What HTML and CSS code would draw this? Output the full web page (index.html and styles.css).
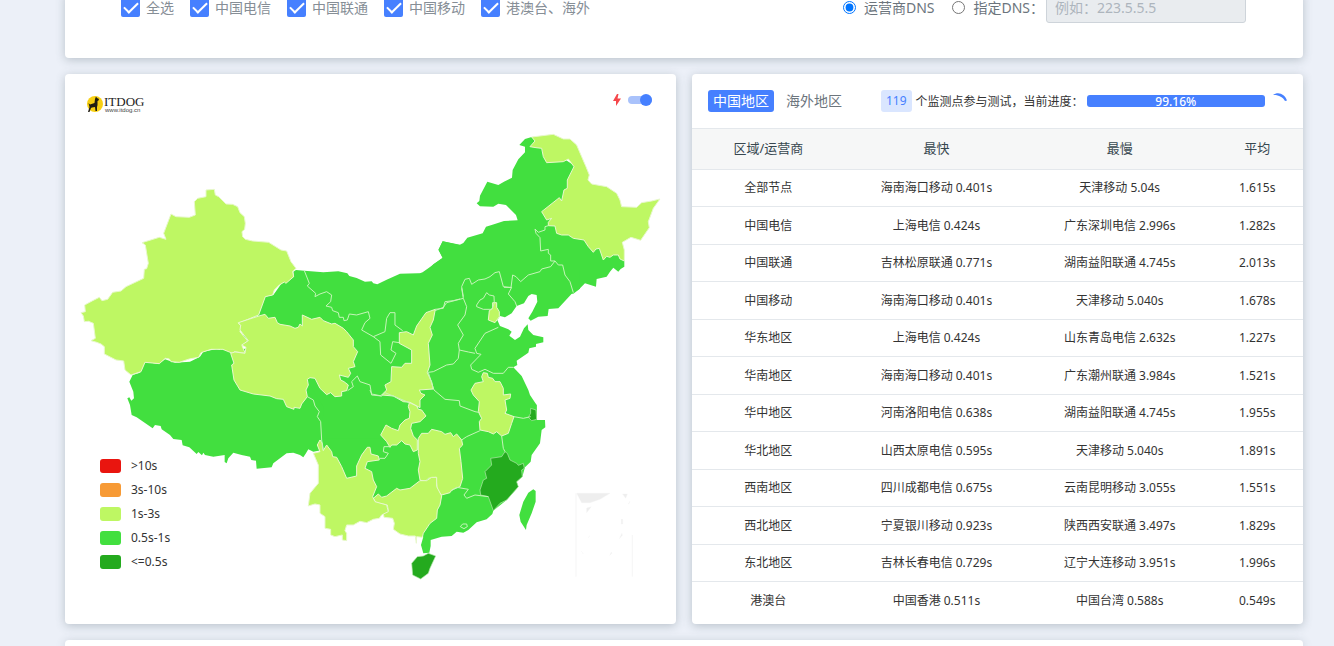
FILE: index.html
```html
<!DOCTYPE html>
<html lang="zh-CN">
<head>
<meta charset="utf-8">
<title>ITDOG</title>
<link rel="stylesheet" href="styles.css">
</head>
<body>
<main class="page">
  <form class="card options">
    <div class="checks">
      <label class="check"><input type="checkbox" checked>全选</label>
      <label class="check"><input type="checkbox" checked>中国电信</label>
      <label class="check"><input type="checkbox" checked>中国联通</label>
      <label class="check"><input type="checkbox" checked>中国移动</label>
      <label class="check"><input type="checkbox" checked>港澳台、海外</label>
    </div>
    <div class="dns">
      <label class="radio"><input type="radio" name="dns" checked>运营商DNS</label>
      <label class="radio"><input type="radio" name="dns" id="custom">指定DNS：</label>
      <input class="dns-input" type="text" aria-label="指定DNS" placeholder="例如：223.5.5.5" disabled>
    </div>
  </form>

  <div class="columns">
    <section class="card map-card">
      <svg class="map" viewBox="65 74 611 550" role="img" aria-label="中国地图">
        <!-- mainland -->
        <g class="mid">
          <path transform="translate(220 240) scale(.3333)" d="M228 90L253 92 310 97 355 94 382 100 388 108 410 114 435 125 455 124 460 130 472 133 500 119 540 101 600 101 622 94 640 73 668 54 656 30 668 4 720 14V602H0V327L40 335 80 325 60 250 117 222 133 170 160 165 185 130 222 110 220 95Z"/>
          <path transform="translate(430 125) scale(.3333)" d="M-20 440L0 426 38 398 25 374 38 349 88 360 100 354 112 338 158 325 168 305 192 298 222 288 263 286 258 270 228 240 205 236 190 245 150 244 140 235 148 228 150 212 172 170 205 180 222 170 246 158 248 135 265 103 285 82 285 65 268 60 285 42 305 36 430 120 480 250 583 405 583 425 572 432 565 440 550 428 540 440 530 455 500 462 498 485 465 475 445 495 430 506H-20Z"/>
          <path transform="translate(400 270) scale(.3333)" d="M85 0H540V56L518 68 475 115 446 117 443 138 415 140 392 152 385 145 397 125 412 95 410 75 395 72 385 78 372 100 350 108 335 130 315 142 300 138 292 150 300 168 325 178 335 185 328 197 345 210 360 200 372 175 383 163 385 180 400 195 430 202 430 217 408 222 408 230 388 235 385 248 350 272 352 285 340 292 350 302 365 318 385 360 390 375 410 405V452H0V12L60 10Z"/>
          <path transform="translate(360 390) scale(.3333)" d="M0 0H500L512 30 530 45V90L555 90 556 112 545 120 540 160 515 195 512 215 495 232 487 260 470 275 475 290 440 330 400 362 397 372 380 388 350 397 325 420 310 428 290 425 275 438 245 440 212 450 212 468 208 488 190 490 183 465 190 440 120 380 0 330Z"/>
          <path transform="translate(90 340) scale(.3333)" d="M165 65L205 72 225 58 255 68 300 65 330 50 340 35 380 27 425 38 500 90 650 120 700 200 697 295H1000V420H770L697 330 670 335 655 328 648 340 640 352 630 345 610 338 590 340 550 370 545 382 500 386 498 362 484 360 480 350 455 345 430 338 415 355 410 370 404 366 404 345 370 350 345 345 340 338 336 346 325 336 320 342 298 322 278 316 275 300 250 297 240 285 215 268 212 258 195 255 188 265 140 232 125 225 120 195 112 175 118 172 124 182 132 175 130 155 118 125 128 105 150 98Z"/>
          <path transform="translate(360 390) scale(.3333)" d="M520 298L527 303 527 335 515 370 500 405 498 420 482 395 478 375 490 335 505 308Z"/>
        </g>
        <!-- slower provinces -->
        <g class="light">
          <path transform="translate(76 180) scale(.3333)" d="M390 30L415 28 418 45 428 50 450 72 470 73 485 80 492 98 505 110 508 130 506 148 498 155 500 170 508 178 530 183 578 187 615 210 632 213 645 245 660 265 650 275 653 290 630 310 625 306 610 315 595 330 590 345 568 350 548 405 487 430 497 440 492 455 515 483 498 497 508 520 475 515 470 520 440 508 405 508 375 518 368 532 340 537 310 547 285 545 280 537 268 535 250 551 207 547 195 575 165 585 147 570 143 543 120 540 85 522 85 500 75 492 62 487 45 482 58 475 52 430 38 424 25 425 22 408 15 398 28 395 26 375 50 362 70 352 78 362 95 358 110 337 135 333 150 320 203 295 205 268 212 266 217 250 208 195 198 188 250 172 270 178 263 160 285 102 300 110 340 112 358 105 355 65 365 55 390 50Z"/>
          <path transform="translate(220 240) scale(.3333)" d="M117 228L135 223 145 235 165 232 172 248 180 253 210 258 225 265 235 262 240 252 247 258 247 225 275 238 300 232 310 242 335 252 345 250 370 265 380 275 400 300 400 320 413 335 400 365 405 380 385 385 392 400 385 412 358 405 362 420 372 425 385 435 380 452 365 455 365 468 345 470 332 458 320 464 300 445 285 415 270 413 262 418 265 435 258 450 262 470 245 492 240 505 222 502 222 508 200 500 190 478 170 476 150 468 100 462 60 450 42 420 35 375 42 370 32 340 45 336 75 340 78 322 65 315 85 302 60 270 62 256 55 248Z"/>
          <path transform="translate(220 240) scale(.3333)" d="M646 208L640 240 630 262 637 285 625 310 630 375 622 398 635 425 640 447 598 450 603 460 615 465 600 480 600 503 570 487 550 485 520 468 485 465 500 450 495 435 513 425 515 380 545 382 555 370 575 370 575 330 538 310 538 278 560 275 580 285 590 258 618 218Z"/>
          <path transform="translate(430 125) scale(.3333)" d="M305 36L370 28 400 42 420 42 440 60 455 95 468 125 478 150 474 165 485 177 530 185 560 205 570 225 575 245 620 247 635 233 665 228 690 222 670 250 655 290 658 308 632 346 603 337 577 352 583 375 583 408 570 402 565 390 550 390 540 397 530 394 520 405 508 370 498 372 490 382 475 365 462 345 430 340 415 330 395 330 380 325 375 303 355 302 355 292 365 280 350 285 335 260 388 218 395 228 402 195 412 190 412 165 432 125 415 102 400 110 350 113 340 95 335 70 318 68 300 65 315 48Z"/>
          <path transform="translate(400 270) scale(.3333)" d="M278 98L290 98 290 112 298 125 298 140 285 158 265 150 268 122 278 115Z"/>
          <path transform="translate(360 390) scale(.3333)" d="M148 38L170 48 175 58 185 60 198 78 180 95 155 100 152 115 160 138 172 150 172 180 160 185 150 165 135 162 125 152 110 165 95 165 90 172 80 155 62 135 78 105 95 115 115 122 120 105 135 90 148 85 150 65 145 50Z"/>
          <path transform="translate(360 390) scale(.3333)" d="M185 130L205 130 215 118 245 125 255 133 272 128 280 140 290 132 305 150 308 165 298 175 303 215 308 265 300 290 275 300 270 308 245 315 232 300 228 262 205 265 195 275 180 270 175 240 180 215 175 190 175 145Z"/>
          <path transform="translate(360 390) scale(.3333)" d="M40 325L55 312 65 322 80 318 110 295 120 300 150 295 180 272 200 272 215 262 230 262 230 290 245 318 240 345 232 360 230 385 210 400 190 430 187 442 170 440 169 460 166 438 145 438 120 432 100 418 103 400 98 385 72 382 70 370 85 362 82 345 48 338Z"/>
          <path transform="translate(360 390) scale(.3333)" d="M370 -52L382 -50 385 -38 398 -35 405 -25 420 -25 430 -5 430 15 452 12 450 25 435 30 440 60 435 70 462 80 455 100 445 130 425 138 410 125 400 132 385 125 360 120 358 95 365 85 355 65 358 35 340 15 333 0 345 -20 370 -25 365 -40Z"/>
          <path transform="translate(90 340) scale(.3333)" d="M690 300L697 310 700 332 710 315 725 335 728 350 740 352 755 380 770 415 800 408 800 378 815 345 832 322 840 322 843 342 865 348 868 360 832 365 825 385 845 395 850 420 860 440 848 470 855 485 890 495 895 515 875 525 868 535 850 538 830 548 810 544 790 555 770 555 765 572 770 580 770 602 757 600 757 585 735 590 722 585 722 568 705 565 705 530 690 520 690 495 675 492 655 498 660 460 685 430 685 375 670 340 690 335 682 315Z"/>
        </g>
        <!-- fastest provinces -->
        <g class="dark" transform="translate(360 390) scale(.3333)">
          <path d="M435 185L442 190 450 210 470 220 475 226 490 220 493 235 485 240 487 260 470 275 475 290 440 330 420 340 400 362 385 320 362 315 360 300 370 270 380 265 375 245 395 225 392 205 425 200Z"/>
          <path d="M512 55L528 60 530 88 515 92 505 82 512 70Z"/>
          <path d="M155 520L172 500 190 498 205 490 227 498 210 535 205 550 182 567 158 555Z"/>
        </g>
        <!-- province borders -->
        <g class="border">
          <path transform="translate(220 240) scale(.3333)" d="M253 92L268 130 262 138 287 160 285 170 300 162 320 155 335 165 332 185 318 198 335 202 338 212 355 218 358 232 370 232 372 242 382 240 388 222 410 225 445 215 450 235 435 248 425 270 460 290 495 275 500 235 510 218 525 218 525 255 548 272M460 290L480 305 482 345 513 370 528 340 513 330 518 305 538 308M383 452L400 440 395 425 412 408 420 425 450 435 455 465 485 468M262 470L280 480 285 498 298 515 292 530 302 545 305 600 309 630M646 208L670 205 675 185 700 182 720 177"/>
          <path transform="translate(430 125) scale(.3333)" d="M355 302L345 305 345 315 325 322 315 312 318 325 330 338 332 378 355 373 355 385 362 390 362 408 375 408 385 420 398 420 405 450 420 470 430 503M375 408L362 425 335 432 330 440 295 450 272 470 258 455 248 450 243 488 220 485 208 440 195 443 180 455 165 462 145 465 125 478 118 460 105 463 95 485 100 515"/>
          <path transform="translate(400 270) scale(.3333)" d="M312 52L335 52 325 72 345 95 350 108M85 307L100 305 140 285 160 282 175 265 178 240 175 220 190 195 173 165 195 135 200 110 190 85 140 98 130 112 105 122M190 85L185 55M178 240L205 246 225 250M295 172L255 190 225 235 230 250 243 253 212 285 215 298 235 307 255 298 280 310 310 310 325 292 340 292M230 105L240 90 250 85 260 68 268 75 282 78 283 100 275 118 250 118 230 110ZM85 307L95 340 102 360 135 388 178 392 180 408 225 425 240 428"/>
          <path transform="translate(360 390) scale(.3333)" d="M305 150L320 140 360 122M425 138L430 175 435 185M462 80L490 85 512 80M275 302L290 292 325 298 312 315 320 325 345 315 385 320M92 170L72 170 70 185 85 190 75 205 58 205M30 0L35 12 65 18 75 8 148 38M301 410L308 402 320 402 322 410 312 416Z"/>
        </g>
        <!-- South China Sea inset -->
        <g transform="translate(560 480) scale(.3333)">
          <path class="inset-frame" d="M48 290V40M217 290V165"/>
          <path class="inset-land" d="M50 40H150L120 58 90 68 65 68ZM188 42H202L197 55ZM80 84L94 80 80 98ZM184 118H188V132H184ZM178 176L186 160 187 166ZM149 226L154 216 155 221ZM84 173L90 168ZM205 72L209 64 208 70ZM64 213L70 222Z"/>
        </g>
        <!-- logo -->
        <circle cx="95" cy="104" r="8" fill="#f8d013"/>
        <path d="M96 96.500L97 98 99 99 98.500 100.500 97.500 101 97.500 105 97 107 97 111 95.500 111 95 107 92 107.500 91 108 89.500 112 88 112 89.500 107 88.500 103 90 104.500 94.500 103 95 99Z" fill="#211d12"/>
        <text class="logo-name" x="104" y="106">ITDOG</text>
        <text class="logo-url" x="105" y="112">www.itdog.cn</text>
      </svg>
      <div class="map-tools">
        <svg class="bolt" viewBox="0 0 8 12" aria-hidden="true"><path d="M4 0L0 7H3L3 12 8 4.500H4.500L5.500 0Z"/></svg>
        <input class="toggle" type="checkbox" role="switch" aria-label="快速" checked>
      </div>
      <ul class="legend">
        <li><i class="swatch red"></i>&gt;10s</li>
        <li><i class="swatch orange"></i>3s-10s</li>
        <li><i class="swatch lime"></i>1s-3s</li>
        <li><i class="swatch green"></i>0.5s-1s</li>
        <li><i class="swatch forest"></i>&lt;=0.5s</li>
      </ul>
    </section>

    <section class="card result-card">
      <header class="result-head">
        <div class="tabs">
          <button class="tab active" type="button">中国地区</button>
          <button class="tab" type="button">海外地区</button>
        </div>
        <span class="badge">119</span>
        <span class="status">个监测点参与测试，当前进度：</span>
        <div class="progress"><div class="bar">99.16%</div></div>
        <svg class="spinner" viewBox="0 0 16 16" aria-hidden="true"><path d="M2 2C7-2 14 1 16 7.500L14 8C12 4 7 1.500 2 2Z"/></svg>
      </header>
      <table class="results">
        <colgroup><col class="c1"><col class="c2"><col class="c3"><col class="c4"></colgroup>
        <thead><tr><th>区域/运营商</th><th>最快</th><th>最慢</th><th>平均</th></tr></thead>
        <tbody>
          <tr><td>全部节点</td><td>海南海口移动 0.401s</td><td>天津移动 5.04s</td><td>1.615s</td></tr>
          <tr><td>中国电信</td><td>上海电信 0.424s</td><td>广东深圳电信 2.996s</td><td>1.282s</td></tr>
          <tr><td>中国联通</td><td>吉林松原联通 0.771s</td><td>湖南益阳联通 4.745s</td><td>2.013s</td></tr>
          <tr><td>中国移动</td><td>海南海口移动 0.401s</td><td>天津移动 5.040s</td><td>1.678s</td></tr>
          <tr><td>华东地区</td><td>上海电信 0.424s</td><td>山东青岛电信 2.632s</td><td>1.227s</td></tr>
          <tr><td>华南地区</td><td>海南海口移动 0.401s</td><td>广东潮州联通 3.984s</td><td>1.521s</td></tr>
          <tr><td>华中地区</td><td>河南洛阳电信 0.638s</td><td>湖南益阳联通 4.745s</td><td>1.955s</td></tr>
          <tr><td>华北地区</td><td>山西太原电信 0.595s</td><td>天津移动 5.040s</td><td>1.891s</td></tr>
          <tr><td>西南地区</td><td>四川成都电信 0.675s</td><td>云南昆明移动 3.055s</td><td>1.551s</td></tr>
          <tr><td>西北地区</td><td>宁夏银川移动 0.923s</td><td>陕西西安联通 3.497s</td><td>1.829s</td></tr>
          <tr><td>东北地区</td><td>吉林长春电信 0.729s</td><td>辽宁大连移动 3.951s</td><td>1.996s</td></tr>
          <tr><td>港澳台</td><td>中国香港 0.511s</td><td>中国台湾 0.588s</td><td>0.549s</td></tr>
        </tbody>
      </table>
    </section>
  </div>

  <section class="card next-card"></section>
</main>
</body>
</html>
```

FILE: styles.css
```css
* {
  box-sizing: border-box;
}

body {
  margin: 0;
  background: #ecf0f8;
  color: #333;
  font-family: "Noto Sans", "Noto Sans CJK SC", sans-serif;
  font-size: 12px;
}

.page {
  display: flex;
  flex-direction: column;
  gap: 16px;
  min-height: calc(100vh + 8px);
  margin-top: -8px;
  padding: 0 31px 0 65px;
}

.card {
  background: #fff;
  border-radius: 4px;
  box-shadow: 0 2px 10px 0 rgba(69, 90, 100, 0.3);
}

/* options */
.options {
  display: flex;
  justify-content: space-between;
  align-items: center;
  padding: 0 57px 35px 56px;
  color: #868e96;
  font-size: 14px;
  line-height: 31px;
}

.checks {
  display: flex;
  gap: 16px;
}

.check {
  display: flex;
  align-items: center;
  gap: 6px;
}

.check input {
  appearance: none;
  display: grid;
  place-items: center;
  width: 19px;
  height: 19px;
  margin: 0;
  border-radius: 2px;
  background: #4680ff;
}

.check input::before {
  content: "";
  width: 12px;
  height: 6px;
  margin-bottom: 4px;
  border: solid #fff;
  border-width: 0 0 2px 2px;
  transform: rotate(-45deg);
}

.dns {
  display: flex;
  align-items: center;
}

.radio {
  display: flex;
  align-items: center;
  gap: 8px;
  margin-right: 18px;
  color: #6c757d;
}

.radio + .radio {
  margin-right: 2px;
}

.radio input {
  width: 13px;
  height: 13px;
  margin: 0;
}

.dns-input {
  width: 200px;
  height: 31px;
  padding: 0 8px;
  border: 1px solid #ced4da;
  border-radius: 3px;
  background: #e9ecef;
  font: inherit;
}

.dns-input::placeholder {
  color: #adb5bd;
}

/* columns */
.columns {
  display: grid;
  grid-template-columns: 1fr 1fr;
  gap: 16px;
}

.map-card {
  position: relative;
}

.map {
  display: block;
  width: 100%;
}

.mid {
  fill: #42df3f;
}

.light {
  fill: #bef763;
  stroke: #e8f8cd;
  stroke-width: 3;
}

.dark {
  fill: #24aa1e;
  stroke: #b5e8ae;
  stroke-width: 2;
}

.border {
  fill: none;
  stroke: #c5f5b8;
  stroke-width: 3;
}

.inset-frame {
  fill: none;
  stroke: #f5f5f5;
  stroke-width: 3;
}

.inset-land {
  fill: #eee;
  stroke: #f3f3f3;
}

.logo-name {
  fill: #222;
  font: 13px "Liberation Serif", serif;
}

.logo-url {
  fill: #444;
  font: 6px "Liberation Sans", sans-serif;
}

.map-tools {
  position: absolute;
  top: 20px;
  right: 24px;
  display: flex;
  align-items: center;
  gap: 7px;
}

.bolt {
  width: 8px;
  height: 12px;
  fill: #f5474b;
}

.toggle {
  appearance: none;
  display: flex;
  align-items: center;
  justify-content: flex-end;
  width: 24px;
  height: 8px;
  margin: 0;
  border-radius: 4px;
  background: #a9c2fb;
}

.toggle::before {
  content: "";
  width: 12px;
  height: 12px;
  border-radius: 50%;
  background: #4680ff;
}

.legend {
  position: absolute;
  left: 35px;
  bottom: 50px;
  margin: 0;
  padding: 0;
  list-style: none;
}

.legend li {
  display: flex;
  align-items: center;
  gap: 10px;
  height: 24px;
  line-height: 16px;
}

.swatch {
  width: 21px;
  height: 14px;
  border-radius: 3px;
}

.red { background: #e9150f; }
.orange { background: #f79a35; }
.lime { background: #bef763; }
.green { background: #42df3f; }
.forest { background: #24aa1e; }

/* results */
.result-head {
  display: flex;
  align-items: center;
  height: 54px;
  padding: 0 16px;
  white-space: nowrap;
}

.tabs {
  display: flex;
  gap: 7px;
  margin-right: 34px;
}

.tab {
  height: 22px;
  padding: 0 5px;
  border: 0;
  border-radius: 3px;
  background: none;
  color: #6c757d;
  font: inherit;
  font-size: 14px;
  line-height: 22px;
}

.tab.active {
  background: #4680ff;
  color: #fff;
}

.badge {
  margin-right: 4px;
  padding: 0 5px;
  border-radius: 3px;
  background: #dae6ff;
  color: #4680ff;
  font-size: 12px;
  line-height: 22px;
}

.status {
  margin-right: 3px;
}

.progress {
  flex: 1;
  margin-right: 6px;
}

.bar {
  height: 12px;
  border-radius: 3px;
  background: #4680ff;
  color: #fff;
  font-weight: 500;
  line-height: 13px;
  text-align: center;
}

.spinner {
  width: 16px;
  height: 16px;
  fill: #4680ff;
}

.results {
  width: 100%;
  margin-bottom: 5px;
  border-collapse: separate;
  border-spacing: 0;
  table-layout: fixed;
  text-align: center;
}

.c1 { width: 25%; }
.c2 { width: 30%; }
.c3 { width: 30%; }
.c4 { width: 15%; }

.results th {
  height: 42px;
  padding: 0 0 3px;
  border: solid #e4e8ec;
  border-width: 1px 0;
  background: #f6f7f7;
  color: #37474f;
  font-size: 13px;
  font-weight: 400;
}

.results td {
  height: 38px;
  padding: 0;
  border-top: 1px solid #e4e8ec;
  line-height: 18px;
}

.results tr:nth-child(odd) td {
  height: 37px;
}

.results tbody tr:first-child td {
  height: 36px;
  border-top: 0;
}

.next-card {
  flex: 1;
  border-radius: 4px 4px 0 0;
}
```
